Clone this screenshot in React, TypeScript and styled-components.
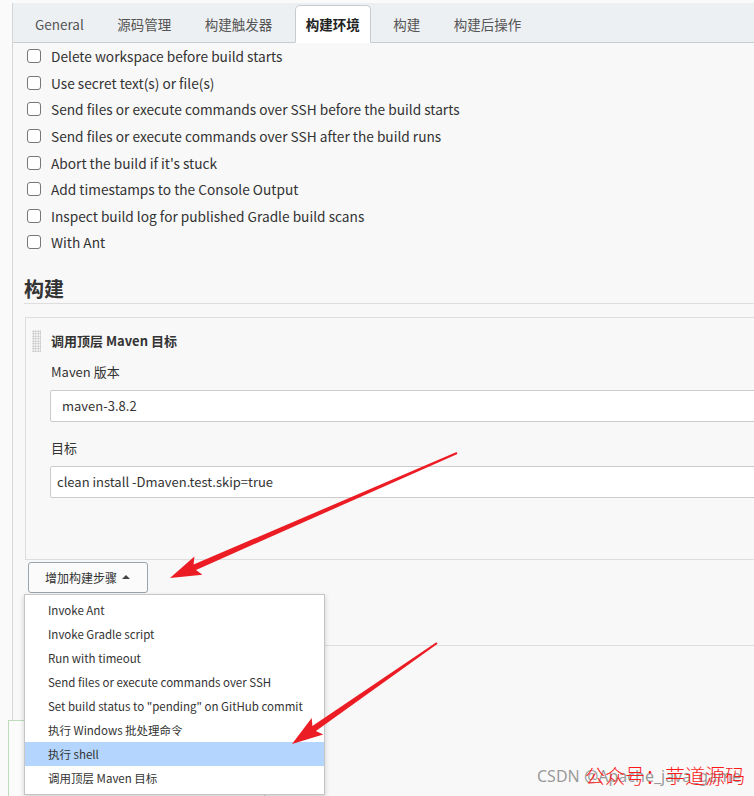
import styled, { createGlobalStyle } from 'styled-components';

const GlobalStyle = createGlobalStyle`
  html, body {
    margin: 0;
    padding: 0;
    background: #f9f9f9;
    overflow: hidden;
  }
  body {
    font-family: "Noto Sans CJK SC", "Noto Sans", sans-serif;
    color: #333;
  }
`;

const TABS = ['General', '源码管理', '构建触发器', '构建环境', '构建', '构建后操作'];
const ACTIVE_TAB = '构建环境';

const OPTIONS = [
  'Delete workspace before build starts',
  'Use secret text(s) or file(s)',
  'Send files or execute commands over SSH before the build starts',
  'Send files or execute commands over SSH after the build runs',
  "Abort the build if it's stuck",
  'Add timestamps to the Console Output',
  'Inspect build log for published Gradle build scans',
  'With Ant',
];

const STEP_TYPES = [
  'Invoke Ant',
  'Invoke Gradle script',
  'Run with timeout',
  'Send files or execute commands over SSH',
  'Set build status to "pending" on GitHub commit',
  '执行 Windows 批处理命令',
  '执行 shell',
  '调用顶层 Maven 目标',
];

// arrow polygon: thin tail growing to a wide head
const arrowPoints = (tx: number, ty: number, px: number, py: number, head = 27, wing = 10) => {
  const len = Math.hypot(px - tx, py - ty);
  const ux = (px - tx) / len;
  const uy = (py - ty) / len;
  const nx = -uy;
  const ny = ux;
  const bx = px - ux * head;
  const by = py - uy * head;
  const pts = [
    [tx + nx * 1, ty + ny * 1],
    [bx + nx * 3, by + ny * 3],
    [bx + nx * wing + ux * -4, by + ny * wing + uy * -4],
    [px, py],
    [bx - nx * wing + ux * -4, by - ny * wing + uy * -4],
    [bx - nx * 3, by - ny * 3],
    [tx - nx * 1, ty - ny * 1],
  ];
  return pts.map(([x, y]) => `${x.toFixed(1)},${y.toFixed(1)}`).join(' ');
};

const App = () => {
  return (
    <>
      <GlobalStyle />
      <Page>
        <Main>
          <TabBar>
            {TABS.map((tab) => (
              <Tab key={tab} active={tab === ACTIVE_TAB}>
                {tab}
              </Tab>
            ))}
          </TabBar>

          <OptionList>
            {OPTIONS.map((opt) => (
              <OptionRow key={opt}>
                <CheckBox />
                <span>{opt}</span>
              </OptionRow>
            ))}
          </OptionList>

          <SectionTitle>构建</SectionTitle>

          <StepCard>
            <StepHeader>
              <DragHandle />
              <StepTitle>调用顶层 Maven 目标</StepTitle>
            </StepHeader>
            <Field top={11}>
              <FieldLabel>Maven 版本</FieldLabel>
              <TextBox padLeft={11}>maven-3.8.2</TextBox>
            </Field>
            <Field top={17}>
              <FieldLabel>目标</FieldLabel>
              <TextBox padLeft={6}>clean install -Dmaven.test.skip=true</TextBox>
            </Field>
          </StepCard>

          <AddStepWrap>
            <AddButton>
              增加构建步骤
              <Caret />
            </AddButton>
            <Menu>
              {STEP_TYPES.map((item) => (
                <MenuItem key={item} selected={item === '执行 shell'}>
                  {item}
                </MenuItem>
              ))}
            </Menu>
          </AddStepWrap>

          <Divider />
        </Main>

        <BottomBar />

        <Arrows width="754" height="796" viewBox="0 0 754 796">
          <polygon points={arrowPoints(457, 453, 170, 578)} fill="#ec1c24" />
          <polygon points={arrowPoints(437, 643, 292, 744)} fill="#ec1c24" />
        </Arrows>

        <Watermark>
          <Csdn>CSDN @Apache_java_game</Csdn>
          <RedMark>公众号：芋道源码</RedMark>
        </Watermark>
      </Page>
    </>
  );
};

const Page = styled.div`
  position: relative;
  height: 796px;
  padding: 3px 0 0 12px;
  box-sizing: border-box;
  overflow: hidden;
  background: #fafafa;
`;

const Main = styled.div`
  border-left: 1px solid #d6d6d6;
  background: #f8f8f8;
  margin-right: -40px;
  min-height: 793px;
`;

const TabBar = styled.div`
  display: flex;
  align-items: flex-end;
  gap: 11.5px;
  height: 39px;
  padding-left: 11px;
  background: #edf0f3;
  border-bottom: 1px solid #c8ccd0;
`;

const Tab = styled.div<{ active: boolean }>`
  display: flex;
  align-items: center;
  height: 36px;
  padding: 0 10px;
  margin-bottom: -1px;
  font-size: 13.5px;
  color: ${(props) => (props.active ? '#222' : '#555')};
  font-weight: ${(props) => (props.active ? 700 : 400)};
  background: ${(props) => (props.active ? '#fff' : 'transparent')};
  border: 1px solid ${(props) => (props.active ? '#c8ccd0' : 'transparent')};
  border-bottom: 1px solid ${(props) => (props.active ? '#fff' : 'transparent')};
  border-radius: 5px 5px 0 0;
`;

const OptionList = styled.div`
  display: flex;
  flex-direction: column;
  padding-left: 14px;
`;

const OptionRow = styled.label`
  display: flex;
  align-items: center;
  gap: 10px;
  height: 26.6px;
  font-size: 13.7px;
  color: #333;
`;

const CheckBox = styled.span`
  width: 12px;
  height: 12px;
  border: 1px solid #777;
  border-radius: 3px;
  background: #fff;
  flex-shrink: 0;
`;

const SectionTitle = styled.h2`
  margin: 19px 0 0 11px;
  font-size: 20px;
  line-height: 28px;
  font-weight: 700;
  color: #333;
  border-bottom: 1px solid #ddd;
`;

const StepCard = styled.div`
  margin: 13px 0 0 12px;
  padding: 12px 0 61px 6px;
  border: 1px solid #ddd;
  background: #f8f8f8;
`;

const StepHeader = styled.div`
  display: flex;
  align-items: center;
  gap: 10px;
`;

const DragHandle = styled.span`
  width: 9px;
  height: 22px;
  background-image: radial-gradient(#bdbdbd 0.8px, transparent 0.9px);
  background-size: 2.5px 2.5px;
`;

const StepTitle = styled.span`
  font-size: 13px;
  font-weight: 700;
  color: #333;
`;

const Field = styled.div<{ top: number }>`
  display: flex;
  flex-direction: column;
  padding-left: 18px;
  margin-top: ${(props) => props.top}px;
`;

const FieldLabel = styled.div`
  font-size: 13px;
  line-height: 18px;
  margin: 0 0 9px 1px;
  color: #333;
`;

const TextBox = styled.div<{ padLeft: number }>`
  height: 30px;
  display: flex;
  align-items: center;
  padding-left: ${(props) => props.padLeft}px;
  font-size: 13px;
  color: #333;
  background: #fff;
  border: 1px solid #ccc;
  border-radius: 2px;
`;

const AddStepWrap = styled.div`
  position: relative;
  padding: 2px 0 0 15px;
`;

const AddButton = styled.button`
  display: flex;
  align-items: center;
  gap: 5px;
  height: 31px;
  width: 120px;
  padding: 0 0 0 16px;
  font-family: "Noto Sans CJK SC", "Noto Sans", sans-serif;
  font-size: 12px;
  color: #333;
  background: #fbfbfb;
  border: 1px solid #9aa4ad;
  border-radius: 3px;
`;

const Caret = styled.span`
  width: 0;
  height: 0;
  border-left: 4px solid transparent;
  border-right: 4px solid transparent;
  border-bottom: 4px solid #444;
`;

const Menu = styled.div`
  position: absolute;
  top: 34px;
  left: 11px;
  width: 299px;
  padding: 3px 0 4px;
  background: #fff;
  border: 1px solid #c6c6c6;
  box-shadow: 0 2px 5px rgba(0, 0, 0, 0.18);
  z-index: 2;
`;

const MenuItem = styled.div<{ selected: boolean }>`
  height: 24px;
  display: flex;
  align-items: center;
  padding-left: 23px;
  font-size: 11.5px;
  color: #333;
  background: ${(props) => (props.selected ? '#b4d5fd' : 'transparent')};
`;

const Divider = styled.div`
  margin: 52px 0 0 11px;
  border-bottom: 1px solid #ddd;
`;

const BottomBar = styled.div`
  position: absolute;
  left: 8px;
  top: 720px;
  width: 255px;
  height: 90px;
  background: #fbfbfb;
  border: 1px solid #bcdcbc;
`;

const Arrows = styled.svg`
  position: absolute;
  left: 0;
  top: 0;
  z-index: 3;
  pointer-events: none;
`;

const Watermark = styled.div`
  position: absolute;
  left: 537px;
  top: 763px;
  z-index: 4;
`;

const Csdn = styled.span`
  font-family: "Noto Sans", "Noto Sans CJK SC", sans-serif;
  font-size: 16px;
  color: rgba(120, 120, 120, 0.75);
  white-space: nowrap;
`;

const RedMark = styled.span`
  position: absolute;
  left: 48px;
  top: -2px;
  font-size: 20px;
  font-weight: 300;
  color: #ff1a1a;
  white-space: nowrap;
`;

export default App;
